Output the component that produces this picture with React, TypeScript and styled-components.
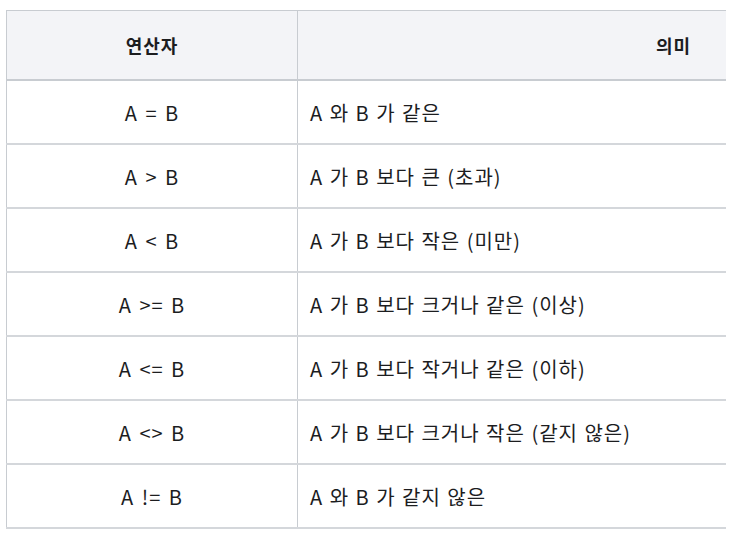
import React from 'react';
import styled, { createGlobalStyle } from 'styled-components';

const GlobalStyle = createGlobalStyle`
    body {
        margin: 0;
        background: #ffffff;
        font-family: "Noto Sans CJK KR", "Noto Sans", sans-serif;
        color: #1c1d1f;
    }
`

const Page = styled.div`
    padding: 10px 20px 0 6px;
`

const Table = styled.table`
    width: 720px;
    border-collapse: collapse;
    table-layout: fixed;
    border-left: 1px solid #c8ccd1;
    border-top: 1px solid #c8ccd1;
`

const HeadCell = styled.th<{ $align: 'center' | 'right' }>`
    height: 68px;
    background: #f3f4f7;
    font-size: 18px;
    font-weight: 700;
    letter-spacing: 1px;
    text-align: ${(p) => p.$align};
    padding: 0 ${(p) => (p.$align === 'right' ? '35px' : '0')} 0 0;
    border-bottom: 2px solid #c8ccd1;
    border-right: 1px solid #c8ccd1;
    &:last-child {
        border-right: none;
    }
`

const Cell = styled.td<{ $center?: boolean }>`
    height: 62px;
    padding: 0 ${(p) => (p.$center ? '0' : '12px')};
    font-size: 20px;
    letter-spacing: 1px;
    text-align: ${(p) => (p.$center ? 'center' : 'left')};
    word-spacing: ${(p) => (p.$center ? '2px' : '1px')};
    border-bottom: 2px solid #d4d7db;
    border-right: 1px solid #c8ccd1;
    &:last-child {
        border-right: none;
    }
`

const rows = [
    ['A = B', 'A 와 B 가 같은'],
    ['A > B', 'A 가 B 보다 큰 (초과)'],
    ['A < B', 'A 가 B 보다 작은 (미만)'],
    ['A >= B', 'A 가 B 보다 크거나 같은 (이상)'],
    ['A <= B', 'A 가 B 보다 작거나 같은 (이하)'],
    ['A <> B', 'A 가 B 보다 크거나 작은 (같지 않은)'],
    ['A != B', 'A 와 B 가 같지 않은'],
]

const App = () => {
    return (
        <Page>
            <GlobalStyle />
            <Table>
                <colgroup>
                    <col style={{ width: 291 }} />
                    <col />
                </colgroup>
                <thead>
                    <tr>
                        <HeadCell $align='center'>연산자</HeadCell>
                        <HeadCell $align='right'>의미</HeadCell>
                    </tr>
                </thead>
                <tbody>
                    {rows.map(([op, meaning]) => (
                        <tr key={op}>
                            <Cell $center>{op}</Cell>
                            <Cell>{meaning}</Cell>
                        </tr>
                    ))}
                </tbody>
            </Table>
        </Page>
    )
}

export default App
